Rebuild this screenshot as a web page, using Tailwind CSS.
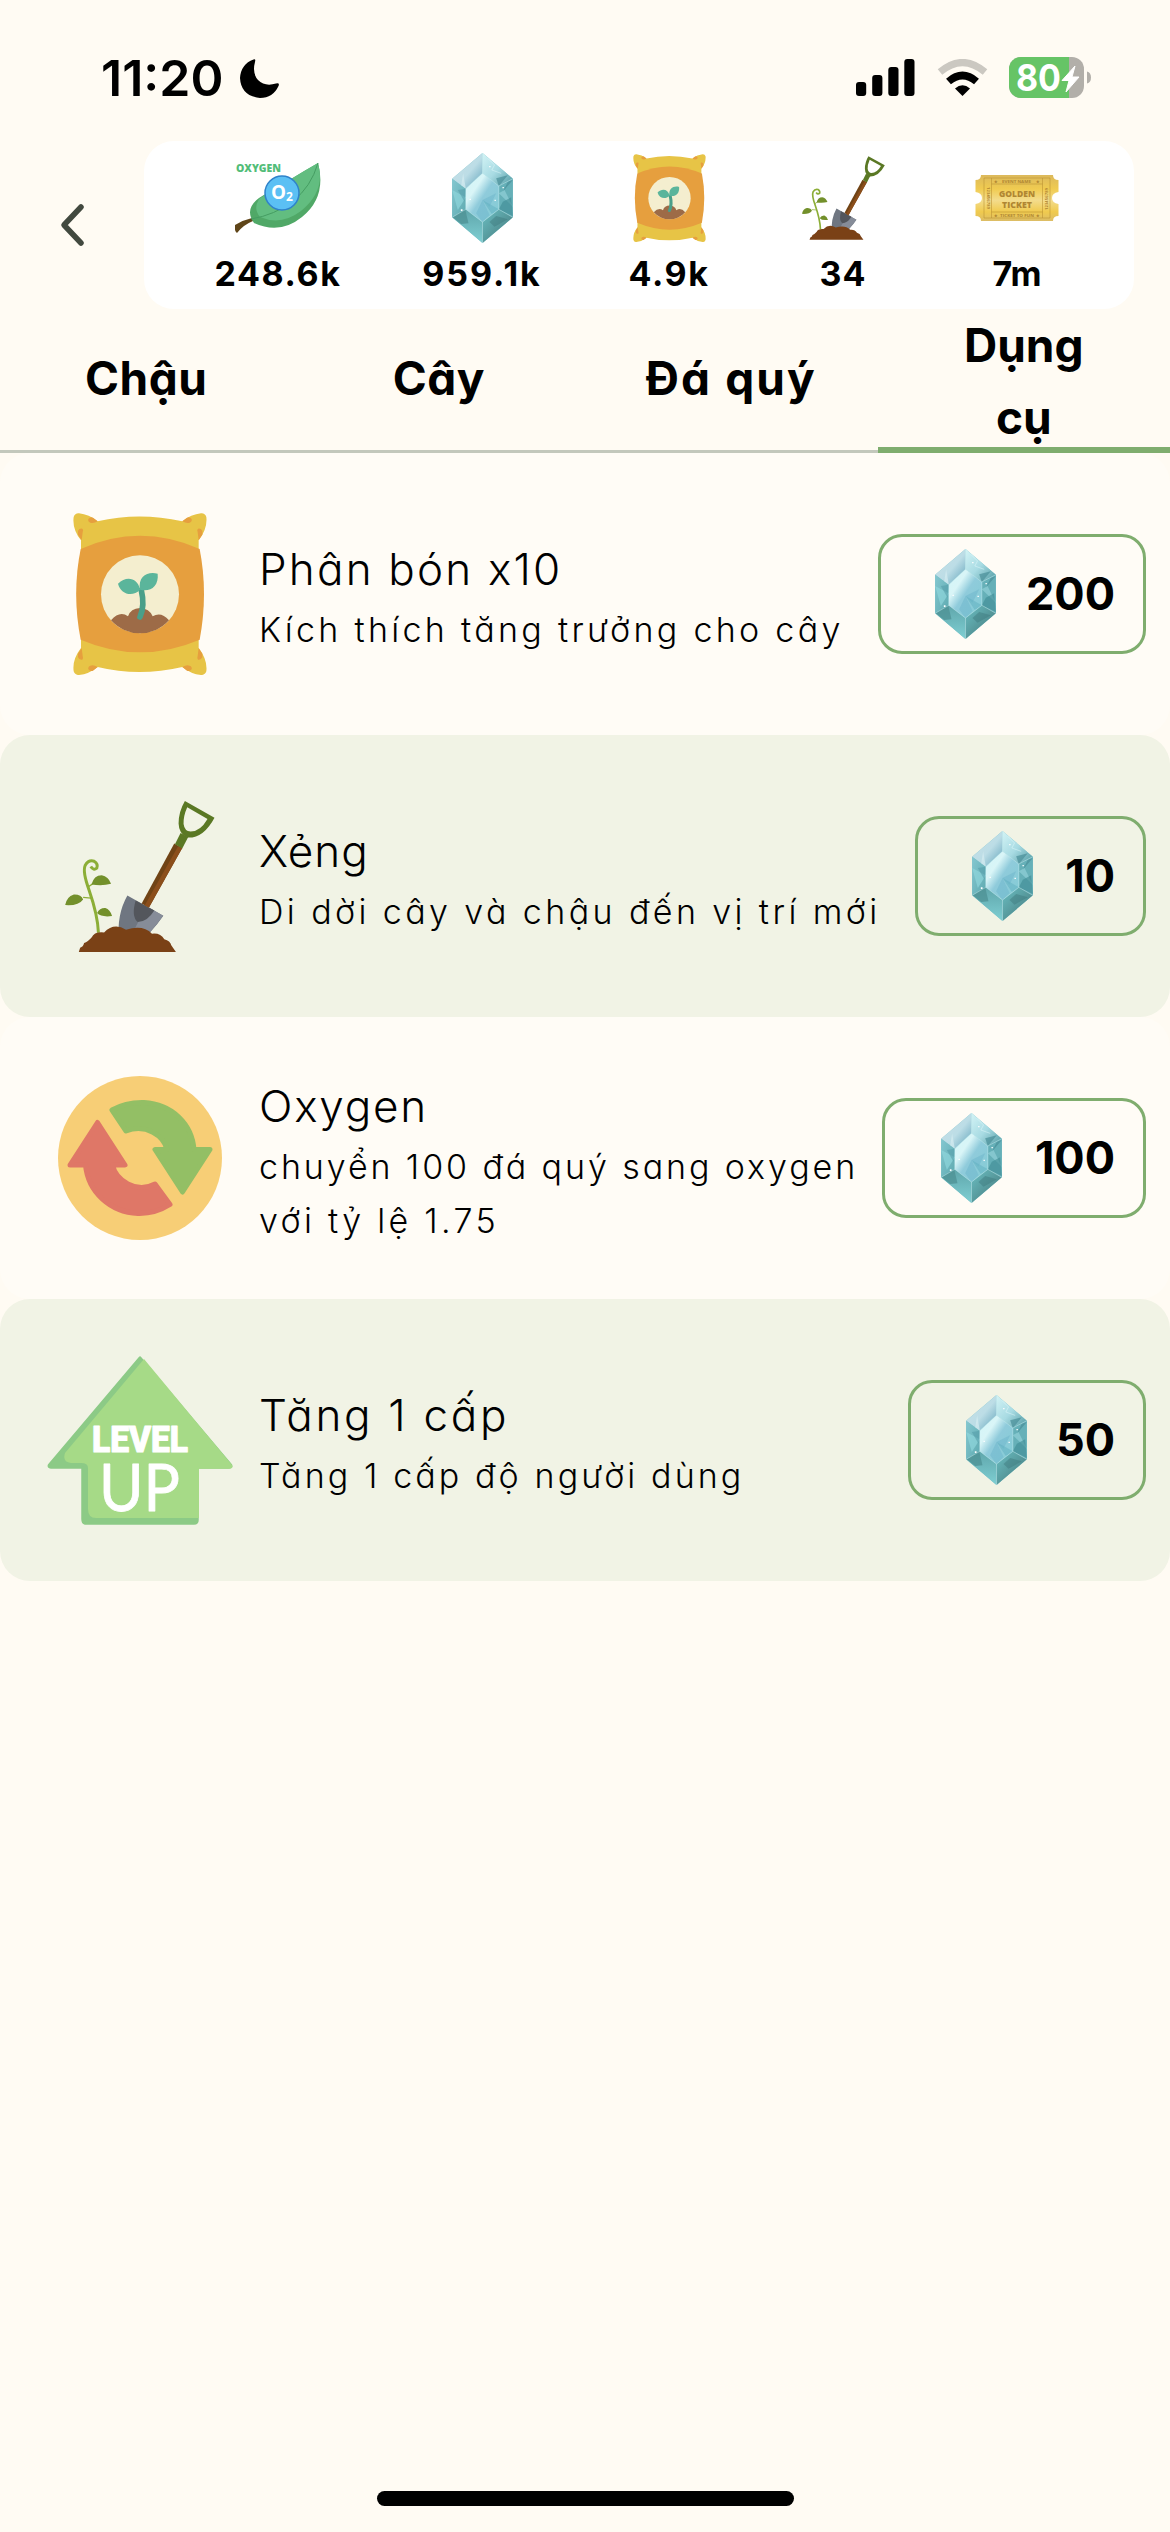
<!DOCTYPE html>
<html lang="vi">
<head>
<meta charset="utf-8">
<title>Cửa hàng</title>
<script src="https://cdn.jsdelivr.net/npm/@tailwindcss/browser@4"></script>
</head>
<body class="bg-[#fffbf3] font-['Inter','Noto_Sans',sans-serif] text-black [font-feature-settings:'cv11']">
<svg class="absolute h-0 w-0" aria-hidden="true">
  <defs>
    <linearGradient id="ga" x1="0" y1="0" x2="1" y2="1"><stop offset="0" stop-color="#c9dfe6"/><stop offset=".55" stop-color="#bcdde6"/><stop offset="1" stop-color="#5fa3ba"/></linearGradient>
    <linearGradient id="gb" x1="0" y1="0" x2="1" y2="1"><stop offset="0" stop-color="#d3f3f5"/><stop offset=".5" stop-color="#a8dbe3"/><stop offset="1" stop-color="#4e98a0"/></linearGradient>
    <linearGradient id="gc" x1="0" y1="0" x2="1" y2="1"><stop offset="0" stop-color="#84c7d0"/><stop offset="1" stop-color="#5eaab0"/></linearGradient>
    <linearGradient id="gd" x1="0" y1="0" x2="0" y2="1"><stop offset="0" stop-color="#5fa6ab"/><stop offset="1" stop-color="#7fcfd3"/></linearGradient>
    <linearGradient id="ge" x1="0" y1="0" x2="1" y2="1"><stop offset="0" stop-color="#6bbfc3"/><stop offset=".5" stop-color="#579a9d"/><stop offset="1" stop-color="#44777b"/></linearGradient>
    <linearGradient id="gf" x1="0" y1="0" x2="1" y2="1"><stop offset="0" stop-color="#d2f6f8"/><stop offset=".3" stop-color="#d9f5f7"/><stop offset=".5" stop-color="#8fcbdb"/><stop offset="1" stop-color="#83ccd4"/></linearGradient>
    <linearGradient id="gt" x1="0" y1="0" x2="0" y2="1"><stop offset="0" stop-color="#dcb95c"/><stop offset=".3" stop-color="#f0cb50"/><stop offset=".55" stop-color="#f3dc8c"/><stop offset=".8" stop-color="#f0ca4e"/><stop offset="1" stop-color="#dcbd66"/></linearGradient>
    <symbol id="gem" viewBox="273 129 182 270">
      <path d="M364 129 455 206V322L364 399 273 322V206Z" fill="#76c0c8"/>
      <path d="M364 129V190L314 236 273 206Z" fill="url(#ga)"/>
      <path d="M364 129 455 206 413 228 364 190Z" fill="url(#gb)"/>
      <path d="M273 206 314 236V298L273 322Z" fill="url(#gc)"/>
      <path d="M455 206 413 228V298L455 322Z" fill="#66b0b8"/>
      <path d="M273 322 314 298 364 336V399Z" fill="url(#gd)"/>
      <path d="M455 322 413 298 364 336V399Z" fill="url(#ge)"/>
      <path d="M364 190 413 228V298L364 336 314 298V236Z" fill="url(#gf)"/>
      <path d="M273 206 300 226 306 190 314 236Z" fill="#d5ecf1" opacity=".7"/>
      <path d="M273 240 314 262 290 300Z" fill="#8fd6dc" opacity=".7"/>
      <path d="M290 240 314 236 310 275Z" fill="#569eaa" opacity=".6"/>
      <path d="M405 205 440 196 413 228ZM455 210 425 245 440 215Z" fill="#4a8f99" opacity=".7"/>
      <path d="M413 250 455 290 430 240Z" fill="#97d5dc" opacity=".6"/>
      <path d="M425 275 450 262 455 318 413 298Z" fill="#3e8a92" opacity=".6"/>
      <path d="M275 322 312 298 322 340 300 342Z" fill="#4b8f92" opacity=".7"/>
      <path d="M364 270 345 310 364 336 385 315ZM364 270 405 250 385 290Z" fill="#6db5cc" opacity=".5"/>
      <path d="M364 270 413 298 392 312Z" fill="#5fb0bf" opacity=".5"/>
      <path d="M385 336 405 318 440 328 400 350Z" fill="#3f7c80" opacity=".5"/>
      <path d="M380 145 400 165 392 180 420 190" fill="none" stroke="#e6fafc" stroke-width="2" opacity=".7"/>
      <path d="M364 129V190L413 228V298L364 336V399M364 190 314 236V298L273 322M314 298 364 336M413 228 455 206M413 298 455 322" fill="none" stroke="#d4f2f5" stroke-width="1.6" opacity=".75"/>
      <path d="M299 298h5v5h-5zM325 266h4v4h-4zM400 269h4v4h-4zM424 231h4v4h-4zM384 168h4v4h-4z" fill="#fff"/>
    </symbol>
    <symbol id="bag" viewBox="102 68 402 486">
      <path d="M104 80Q108 68 120 69Q150 72 176 93Q300 64 430 93Q456 72 486 69Q498 68 502 80Q506 115 479 150V176H126V150Q99 115 104 80Z" fill="#e7c446"/>
      <path d="M104 543Q108 555 120 554Q150 551 176 530Q300 560 430 530Q456 551 486 554Q498 555 502 543Q506 508 479 473V440H126V473Q99 508 104 543Z" fill="#e7c446"/>
      <path d="M125 176Q303 97 482 176Q508 310 482 448Q303 524 125 448Q98 310 125 176Z" fill="#e69f3e"/>
      <path d="M148 86Q154 78 162 82L176 93Q164 100 154 97Q146 94 148 86ZM117 122Q121 113 130 115Q134 117 131 126L128 150L117 133ZM458 86Q452 78 444 82L430 93Q442 100 452 97Q460 94 458 86ZM490 122Q486 113 477 115Q473 117 476 126L479 150L490 133ZM148 537Q154 545 162 541L176 530Q164 523 154 526Q146 529 148 537ZM117 501Q121 510 130 508Q134 506 131 497L128 473L117 490ZM458 537Q452 545 444 541L430 530Q442 523 452 526Q460 529 458 537ZM490 501Q486 510 477 508Q473 506 476 497L479 473L490 490Z" fill="#e69f3e"/>
      <circle cx="303" cy="312" r="117" fill="#f4eecf"/>
      <path d="M216 390Q242 360 267 378Q275 354 303 353Q331 354 341 378Q366 362 390 390A117 117 0 0 1 216 390Z" fill="#9d6b47"/>
      <path d="M307 300Q318 345 303 380" fill="none" stroke="#4a9f89" stroke-width="17" stroke-linecap="round"/>
      <path d="M303 298C296 262 262 256 237 280C246 314 282 320 303 298ZM303 298C296 256 328 242 356 250C360 288 334 306 303 298Z" fill="#5bb59b"/>
    </symbol>
    <symbol id="shovel" viewBox="78 62 450 454">
      <path d="M178 458Q176 405 150 330Q130 275 138 256Q148 238 165 243Q178 251 173 264Q163 272 155 259" fill="none" stroke="#8cae37" stroke-width="9"/>
      <path d="M148 320 168 306M132 352 156 354" stroke="#8cae37" stroke-width="4" fill="none"/>
      <path d="M157 313Q164 285 188 285Q208 288 216 311Q190 318 157 313ZM132 358Q126 342 104 343Q82 350 78 375Q118 378 132 358ZM174 399Q182 383 199 384Q213 388 219 408Q186 412 174 399Z" fill="#73902b"/>
      <path d="M265 346 373 407Q358 430 334 456L320 480H240Q232 405 265 346Z" fill="#6f7681"/>
      <path d="M322 378 373 407 334 456 320 480H270Z" fill="#868c98"/>
      <path d="M290 361 346 391Q325 425 296 426Q276 408 290 361Z" fill="#53565c"/>
      <path d="M406 190 430 203 330 382 308 370Z" fill="#704315"/>
      <path d="M418 197 430 203 330 382 317 376Z" fill="#8b4e1b"/>
      <path d="M425 158 448 170 430 205 408 192Z" fill="#5a7824"/>
      <path fill-rule="evenodd" d="M438 62 527 112Q494 174 446 172 420 163 419 130 419 94 438 62ZM445 81Q433 108 434 131 437 153 455 154 484 154 506 116Z" fill="#5a7824"/>
      <path d="M119 516 123 503Q132 501 135 489Q146 486 158 472Q165 454 195 457Q225 426 261 449Q312 433 339 461Q365 458 376 478Q394 483 397 496L411 516Z" fill="#7a4116"/>
    </symbol>
    <symbol id="swap" viewBox="0 0 164 164">
      <circle cx="82" cy="82" r="82" fill="#f7ce76"/>
      <path d="M54 34Q68 26 86 26.500C114 28 134 48 136 73.500H152L124.500 116 97 73.500H109C106 60 88 47 68 55Z" fill="#93bf65" stroke="#93bf65" stroke-width="5" stroke-linejoin="round"/>
      <path d="M112 128.500Q97 138 80 137.500C52 136 30 116 27.500 89H12L39.500 46.500 67 89H54.500C58 104 78 118 97 108Z" fill="#df7767" stroke="#df7767" stroke-width="5" stroke-linejoin="round"/>
    </symbol>
    <symbol id="levelup" viewBox="0 0 186 170">
      <path d="M93 2.500 184 110Q185 112.500 181 112.500H150.500V165Q150.500 168.500 147 168.500H38Q35.500 168 35.500 164V112.500H4Q1 112 2 110Z" fill="#8cca86" stroke="#8cca86" stroke-width="2.500" stroke-linejoin="round"/>
      <path d="M97 4 185 110Q187 113 183 113.700H152V163H49Q41 163 41 154V113Q41 108 34 108H24Q15 107 18 98Z" fill="#a6da87"/>
      <text x="45" y="96.500" textLength="96" lengthAdjust="spacingAndGlyphs" font-family="Roboto" font-weight="800" font-size="36" fill="#fff" stroke="#fff" stroke-width="1.200" stroke-linejoin="round">LEVEL</text>
      <text x="52" y="156" textLength="81" lengthAdjust="spacingAndGlyphs" font-family="Lato" font-size="66" fill="#fff" stroke="#fff" stroke-width=".8" stroke-linejoin="round">UP</text>
    </symbol>
    <symbol id="leaf" viewBox="0 0 86 70">
      <path d="M0 62Q8 57 17 55L18 58Q8 62 2 70Q-1 68 0 62Z" fill="#5f4519"/>
      <path d="M83 0Q92 34 67 54Q45 72 19 60Q9 46 24 35Q35 28 56 16Q69 8 83 0Z" fill="#50a867"/>
      <path d="M83 0Q91 28 66 48Q46 63 25 54Q18 46 24 36Q35 28 56 16Q69 8 83 0Z" fill="#62bd80"/>
      <path d="M83 0Q76 24 58 38Q40 52 16 56" fill="none" stroke="#459d62"/>
      <circle cx="47" cy="30" r="17" fill="#5bc0f4" stroke="#2f82ca" stroke-width="1.500"/>
      <text x="36" y="36" font-family="Open Sans" font-weight="700" font-size="20" textLength="15" lengthAdjust="spacingAndGlyphs" fill="#fff">O</text>
      <text x="51" y="38" font-family="Open Sans" font-weight="700" font-size="12" fill="#fff">2</text>
      <text x="1" y="8.500" font-family="Open Sans" font-weight="800" font-size="11" textLength="45" lengthAdjust="spacingAndGlyphs" fill="#52bd78">OXYGEN</text>
    </symbol>
    <symbol id="ticket" viewBox="0 0 84 46">
      <path d="M6 0H78Q78 5 83.500 5V17Q77 18 77 23T83.500 29V41Q78 41 78 46H6Q6 41 .5 41V29Q7 28 7 23T.5 17V5Q6 5 6 0Z" fill="url(#gt)"/>
      <path d="M9 3H75V43H9ZM16.500 3V43M67.500 3V43M16.500 9H67.500M16.500 37H67.500" fill="none" stroke="#b98f33" stroke-width=".7" opacity=".8"/>
      <g font-family="Open Sans" fill="#b08632">
        <text x="24" y="21.500" font-weight="800" font-size="8" textLength="36" lengthAdjust="spacingAndGlyphs">GOLDEN</text>
        <text x="27" y="32.500" font-weight="800" font-size="8" textLength="30" lengthAdjust="spacingAndGlyphs">TICKET</text>
        <text x="27" y="8" font-size="4" textLength="29" lengthAdjust="spacingAndGlyphs">EVENT NAME</text>
        <text x="25" y="42" font-size="4" textLength="34" lengthAdjust="spacingAndGlyphs">TICKET TO FUN</text>
        <text x="19" y="8" font-size="4">★</text><text x="61" y="8" font-size="4">★</text>
        <text x="19" y="42" font-size="4">★</text><text x="61" y="42" font-size="4">★</text>
        <text transform="translate(11.500 12) rotate(90)" font-size="4" textLength="22">123456789</text>
        <text transform="translate(72.500 35) rotate(-90)" font-size="4" textLength="22">123456789</text>
      </g>
    </symbol>
  </defs>
</svg>

<div class="flex h-[2532px] w-[1170px] flex-col">
  <header class="flex h-[141px] items-start justify-between pt-[57px] pr-[79px] pl-[101px]">
    <div class="flex gap-[17px]">
      <span class="text-[50px] leading-[42px] font-semibold">11:20</span>
      <svg class="mt-[2px] h-[39px] w-[39px]" viewBox="0 0 39 39"><path d="M13.500.5Q16-.5 15 3Q12 14 18 21Q25 28 36 24.500Q40 23.500 38.500 27Q33 39 20 39Q1 37 0 19Q1 5 13.500.5Z"/></svg>
    </div>
    <div class="flex items-start">
      <svg class="mt-[2px] mr-[22px] h-[37px] w-[59px]" viewBox="0 0 59 37"><rect y="23" width="10.200" height="14" rx="3"/><rect x="16.200" y="16" width="10.200" height="21" rx="3"/><rect x="32.300" y="8" width="10.200" height="29" rx="3"/><rect x="48.300" width="10.200" height="37" rx="3"/></svg>
      <svg class="mt-[2px] mr-[21px] h-[37px] w-[51px]" viewBox="0 0 51 37"><path d="M3 13Q25.500-6 48 13" fill="none" stroke="#cbc8c1" stroke-width="7"/><path d="M11.500 22.500Q25.500 10.500 39.500 22.500" fill="none" stroke="#000" stroke-width="7.500"/><path d="M18 29.500Q25.500 23 33 29.500L25.500 37Z"/></svg>
      <svg class="h-[41px] w-[82px]" viewBox="0 0 82 41"><defs><clipPath id="bt"><rect width="75" height="41" rx="12"/></clipPath></defs><g clip-path="url(#bt)"><path d="M0 0H75V41H0Z" fill="#b2afa9"/><path d="M0 0H60V41H0Z" fill="#66c466"/></g><path d="M78 14.500Q82 15.500 82 20.500T78 26.500Z" fill="#b2afa9"/><text x="7" y="34" font-family="Inter" font-size="37" font-weight="700" textLength="45" lengthAdjust="spacingAndGlyphs" fill="#fff">80</text><path d="M66 9 53 23.500H60L57 35 70 20H63Z" fill="#fff" stroke="#fff" stroke-linejoin="round"/></svg>
    </div>
  </header>

  <div class="flex h-[168px] items-center pr-9">
    <div class="flex w-36 justify-center"><svg class="h-[44px] w-[26px]" viewBox="0 0 26 44"><path d="M22 4 5 22 22 40" fill="none" stroke="#42493f" stroke-width="5.500" stroke-linecap="round" stroke-linejoin="round"/></svg></div>
    <div class="flex h-full flex-1 justify-evenly rounded-[30px] bg-white pt-3 text-[34px] leading-[61px] font-bold">
      <div class="flex w-[148px] flex-col items-center"><div class="flex h-[90px] items-center"><svg class="h-[70px] w-[86px]"><use href="#leaf"/></svg></div><span class="tracking-[1.6px]">248.6k</span></div>
      <div class="flex w-[140px] flex-col items-center"><svg class="h-[90px] w-[61px]"><use href="#gem"/></svg><span class="tracking-[2px]">959.1k</span></div>
      <div class="flex w-[114px] flex-col items-center"><div class="flex h-[90px] items-center"><svg class="h-[88px] w-[73px]"><use href="#bag"/></svg></div><span class="tracking-[1.6px]">4.9k</span></div>
      <div class="flex w-[114px] flex-col items-center"><div class="flex h-[90px] items-center"><svg class="h-[84px] w-[83px]"><use href="#shovel"/></svg></div><span class="tracking-[1px]">34</span></div>
      <div class="flex w-[114px] flex-col items-center"><div class="flex h-[90px] items-center"><svg class="h-[46px] w-[84px]"><use href="#ticket"/></svg></div><span>7m</span></div>
    </div>
  </div>

  <nav class="grid h-36 grid-cols-4 text-[46px] leading-[72px] font-bold">
    <div class="flex items-center justify-center border-b-[3px] border-[#c3c8bc] pb-[3px]"><span class="tracking-[.5px]">Chậu</span></div>
    <div class="flex items-center justify-center border-b-[3px] border-[#c3c8bc] pb-[3px]"><span class="tracking-[.5px]">Cây</span></div>
    <div class="flex items-center justify-center border-b-[3px] border-[#c3c8bc] pb-[3px]"><span class="tracking-[2.1px]">Đá quý</span></div>
    <div class="flex h-36 flex-col items-center border-b-[6px] border-[#7fad6e]"><span>Dụng</span><span>cụ</span></div>
  </nav>

  <main class="text-[34px] leading-[54px] whitespace-nowrap">
    <section class="flex h-[282px] items-center rounded-[30px] bg-[#fffcf6] pr-6 pl-[21px]">
      <div class="flex w-[238px] justify-center"><svg class="h-[162px] w-[134px]"><use href="#bag"/></svg></div>
      <div class="flex flex-1 flex-col items-start pt-[3px] font-light"><h2 class="text-[44px] leading-[68px] font-light tracking-[2.2px]">Phân bón x10</h2><p class="tracking-[3.3px]">Kích thích tăng trưởng cho cây</p></div>
      <button class="flex h-[120px] w-[268px] items-center justify-between rounded-[24px] border-[3px] border-[#7fad6e] pr-[28px] pl-[54px] text-[45px] font-bold"><svg class="h-[90px] w-[61px]"><use href="#gem"/></svg><span>200</span></button>
    </section>
    <section class="flex h-[282px] items-center rounded-[30px] bg-[#f1f3e5] pr-6 pl-[21px]">
      <div class="flex w-[238px] justify-center"><svg class="h-[151px] w-[150px]"><use href="#shovel"/></svg></div>
      <div class="flex flex-1 flex-col items-start pt-[3px] font-light"><h2 class="text-[44px] leading-[68px] font-light tracking-[1px]">Xẻng</h2><p class="tracking-[3.4px]">Di dời cây và chậu đến vị trí mới</p></div>
      <button class="flex h-[120px] w-[231px] items-center justify-between rounded-[24px] border-[3px] border-[#7fad6e] pr-[28px] pl-[54px] text-[45px] font-bold"><svg class="h-[90px] w-[61px]"><use href="#gem"/></svg><span>10</span></button>
    </section>
    <section class="flex h-[282px] items-center rounded-[30px] bg-[#fffcf6] pr-6 pl-[21px]">
      <div class="flex w-[238px] justify-center"><svg class="h-[164px] w-[164px]"><use href="#swap"/></svg></div>
      <div class="flex flex-1 flex-col items-start pt-[3px] font-light"><h2 class="text-[44px] leading-[68px] font-light tracking-[1.8px]">Oxygen</h2><p class="tracking-[2.9px]">chuyển 100 đá quý sang oxygen</p><p class="tracking-[3.3px]">với tỷ lệ 1.75</p></div>
      <button class="flex h-[120px] w-[264px] items-center justify-between rounded-[24px] border-[3px] border-[#7fad6e] pr-[28px] pl-[56px] text-[45px] font-bold"><svg class="h-[90px] w-[61px]"><use href="#gem"/></svg><span>100</span></button>
    </section>
    <section class="flex h-[282px] items-center rounded-[30px] bg-[#f1f3e5] pr-6 pl-[21px]">
      <div class="flex w-[238px] justify-center"><svg class="h-[170px] w-[186px]"><use href="#levelup"/></svg></div>
      <div class="flex flex-1 flex-col items-start pt-[3px] font-light"><h2 class="text-[44px] leading-[68px] font-light tracking-[2.7px]">Tăng 1 cấp</h2><p class="tracking-[3.1px]">Tăng 1 cấp độ người dùng</p></div>
      <button class="flex h-[120px] w-[238px] items-center justify-between rounded-[24px] border-[3px] border-[#7fad6e] pr-[28px] pl-[55px] text-[45px] font-bold"><svg class="h-[90px] w-[61px]"><use href="#gem"/></svg><span>50</span></button>
    </section>
  </main>
  <div class="mx-auto mt-auto mb-[26px] h-[15px] w-[417px] rounded-full bg-black"></div>
</div>
</body>
</html>
